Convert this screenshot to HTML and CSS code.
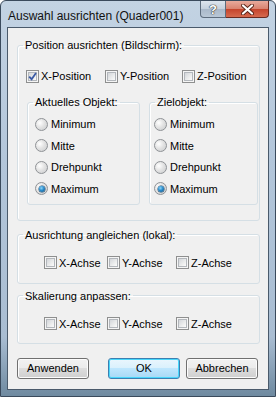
FILE: index.html
```html
<!DOCTYPE html>
<html lang="de">
<head>
    <meta charset="UTF-8">
    <title>Auswahl ausrichten (Quader001)</title>
    <link rel="stylesheet" href="styles.css">
</head>
<body>
    <div class="window">
        <!-- Titelleiste -->
        <div class="titlebar">
            <span class="title">Auswahl ausrichten (Quader001)</span>
            <div class="caption-btns">
                <span class="cbtn help">?</span>
                <span class="cbtn close">
                    <svg width="13" height="11" viewBox="0 0 13 11">
                        <path d="M2 1.5 L11 9.5 M11 1.5 L2 9.5" stroke="#5a2418" stroke-width="4" stroke-linecap="round"/>
                        <path d="M2 1.5 L11 9.5 M11 1.5 L2 9.5" stroke="#ffffff" stroke-width="2.2" stroke-linecap="round"/>
                    </svg>
                </span>
            </div>
        </div>

        <div class="client">
            <fieldset class="group g-pos">
                <legend>Position ausrichten (Bildschirm):</legend>
                <div class="axes axes-pos">
                    <label class="check"><span class="box checked">
                        <svg width="9" height="9" viewBox="0 0 9 9"><path d="M1.2 4.6 L3.6 7.2 L8 1" fill="none" stroke="#3b5ba5" stroke-width="1.8"/></svg>
                    </span>X-Position</label>
                    <label class="check"><span class="box"></span>Y-Position</label>
                    <label class="check"><span class="box"></span>Z-Position</label>
                </div>
                <div class="subgroups">
                    <fieldset class="group sub sub-left">
                        <legend>Aktuelles Objekt:</legend>
                        <div class="radios">
                            <label class="radio"><span class="dot"></span>Minimum</label>
                            <label class="radio"><span class="dot"></span>Mitte</label>
                            <label class="radio"><span class="dot"></span>Drehpunkt</label>
                            <label class="radio"><span class="dot on"></span>Maximum</label>
                        </div>
                    </fieldset>
                    <fieldset class="group sub sub-right">
                        <legend>Zielobjekt:</legend>
                        <div class="radios">
                            <label class="radio"><span class="dot"></span>Minimum</label>
                            <label class="radio"><span class="dot"></span>Mitte</label>
                            <label class="radio"><span class="dot"></span>Drehpunkt</label>
                            <label class="radio"><span class="dot on"></span>Maximum</label>
                        </div>
                    </fieldset>
                </div>
            </fieldset>

            <fieldset class="group g-rot">
                <legend>Ausrichtung angleichen (lokal):</legend>
                <div class="axes axes-small">
                    <label class="check"><span class="box"></span>X-Achse</label>
                    <label class="check"><span class="box"></span>Y-Achse</label>
                    <label class="check"><span class="box"></span>Z-Achse</label>
                </div>
            </fieldset>

            <fieldset class="group g-scale">
                <legend>Skalierung anpassen:</legend>
                <div class="axes axes-small">
                    <label class="check"><span class="box"></span>X-Achse</label>
                    <label class="check"><span class="box"></span>Y-Achse</label>
                    <label class="check"><span class="box"></span>Z-Achse</label>
                </div>
            </fieldset>

            <div class="buttons">
                <button class="btn">Anwenden</button>
                <button class="btn btn-default">OK</button>
                <button class="btn">Abbrechen</button>
            </div>
        </div>
    </div>
</body>
</html>
```

FILE: styles.css
```css
/* Fenster im Vista-Stil */
body {
    margin: 0;
    padding: 0;
    font-family: "Liberation Sans", Arial, sans-serif;
    font-size: 11px;
    color: #000;
    background: #fff;
}
.window {
    width: 276px;
    height: 397px;
    box-sizing: border-box;
    border: 1px solid #3a4a5c;
    border-radius: 6px 6px 0 0;
    background: linear-gradient(to bottom, #c3d3e3 0%, #b3c6da 40%, #a9bdd2 85%, #6f8aa0 100%);
    padding: 0 6px 6px 6px;
    display: flex;
    flex-direction: column;
}
.titlebar {
    height: 26px;
    display: flex;
    align-items: flex-start;
    margin: 0 -6px;
    padding: 0 6px 0 7px;
}
.title {
    font-size: 12px;
    line-height: 14px;
    margin-top: 8px;
    color: #111;
}
.caption-btns {
    margin-left: auto;
    display: flex;
}
.cbtn {
    height: 17px;
    box-sizing: border-box;
    display: flex;
    align-items: center;
    justify-content: center;
}
.help {
    width: 26px;
    border: 1px solid #5d6c7d;
    border-top: none;
    border-radius: 0 0 0 4px;
    background: linear-gradient(to bottom, #dde5ee 0%, #c4d0dd 50%, #a9b8c9 51%, #b9c7d6 100%);
    color: #fff;
    font-weight: bold;
    font-size: 13px;
    text-shadow: 0 0 1px #333, 0 0 1px #333, 0 0 1px #333;
}
.close {
    width: 43px;
    border: 1px solid #6a2a20;
    border-top: none;
    border-left: none;
    border-radius: 0 0 4px 0;
    background: linear-gradient(to bottom, #e9aa9c 0%, #d9826f 50%, #c5442c 51%, #d66a4f 100%);
}
.client {
    flex: 1;
    border: 1px solid #4a5a6b;
    background: #f0f0f0;
    display: flex;
    flex-direction: column;
}

/* Gruppenrahmen */
.group {
    border: 1px solid #d5dfe5;
    border-radius: 3px;
    box-shadow: inset 1px 1px 0 #fff;
    padding: 0;
    margin: 0;
    min-width: 0;
}
.group legend {
    padding: 0 2px;
    margin-left: 5px;
    line-height: 14px;
}
.g-pos {
    margin: 10px 8px 0 9px;
    padding-bottom: 15px;
}
.g-rot {
    margin: 7px 8px 0 9px;
    padding-bottom: 13px;
}
.g-scale {
    margin: 5px 8px 0 9px;
    padding-bottom: 12px;
}

/* Kontrollkästchen */
.axes {
    display: grid;
    height: 14px;
    align-items: center;
}
.axes-pos {
    margin-top: 17px;
    padding-left: 8px;
    grid-template-columns: 79px 77px auto;
}
.axes-small {
    margin-top: 14px;
    padding-left: 26px;
    grid-template-columns: 63px 69px auto;
}
.check, .radio {
    display: flex;
    align-items: center;
    height: 14px;
    white-space: nowrap;
}
.box {
    width: 13px;
    height: 13px;
    box-sizing: border-box;
    border: 1px solid #8e8f8f;
    background: #f5f5f5;
    padding: 1px;
    margin-right: 2px;
    position: relative;
}
.box::before {
    content: "";
    display: block;
    width: 100%;
    height: 100%;
    box-sizing: border-box;
    border: 1px solid #b3b7bc;
    background: linear-gradient(135deg, #d3d6da 0%, #eceded 60%, #fbfbfb 100%);
}
.box svg {
    position: absolute;
    left: 1px;
    top: 1px;
}

/* Untergruppen */
.subgroups {
    display: flex;
    margin-top: 12px;
    padding-left: 9px;
}
.sub {
    padding-bottom: 8px;
}
.sub-left {
    width: 113px;
    box-sizing: border-box;
}
.sub-right {
    width: 109px;
    box-sizing: border-box;
    margin-left: 9px;
}
.radios {
    display: flex;
    flex-direction: column;
    gap: 7.67px;
    margin-top: 8px;
}
.sub-left .radios {
    padding-left: 7px;
}
.sub-right .radios {
    padding-left: 4px;
}
.dot {
    width: 13px;
    height: 13px;
    box-sizing: border-box;
    border-radius: 50%;
    border: 1px solid #8f9296;
    background: radial-gradient(circle at 35% 35%, #ffffff 0%, #e3e3e3 45%, #c9cbcd 100%);
    margin-right: 3px;
    position: relative;
}
.dot.on::after {
    content: "";
    position: absolute;
    left: 2.5px;
    top: 2.5px;
    width: 6px;
    height: 6px;
    border-radius: 50%;
    background: radial-gradient(circle at 40% 35%, #8fd6f7 0%, #2a8ccc 45%, #0f4c7c 100%);
    box-shadow: 0 0 0 0.5px #194a6f;
}

/* Schaltflächen */
.buttons {
    display: flex;
    margin-top: 14px;
    padding-left: 9px;
}
.btn {
    width: 72px;
    height: 21px;
    font-family: inherit;
    font-size: 11px;
    color: #000;
    padding: 0;
    border: 1px solid #707070;
    border-radius: 3px;
    background: linear-gradient(to bottom, #f2f2f2 0%, #ebebeb 49%, #dddddd 50%, #cfcfcf 100%);
    box-shadow: inset 0 0 0 1px #fcfcfc;
}
.btn + .btn {
    margin-left: 6px;
}
.btn-default {
    margin-left: 19px !important;
    border-color: #3c7fb1;
    background: linear-gradient(to bottom, #eaf6fd 0%, #d9f0fc 49%, #bee6fd 50%, #a7d9f5 100%);
    box-shadow: inset 0 0 0 1px #48d7fb;
}
```
